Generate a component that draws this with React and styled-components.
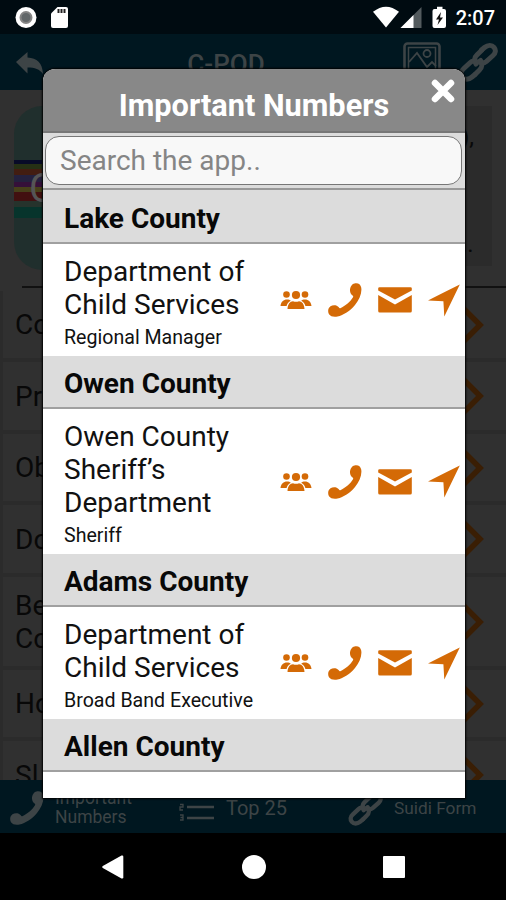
import React from "react";
import styled, { createGlobalStyle } from "styled-components";

const contacts = [
  { county: "Lake County", name: ["Department of", "Child Services"], role: "Regional Manager" },
  { county: "Owen County", name: ["Owen County", "Sheriff’s", "Department"], role: "Sheriff" },
  { county: "Adams County", name: ["Department of", "Child Services"], role: "Broad Band Executive" },
  { county: "Allen County" },
];

const menuItems = [
  { label: ["Co"], height: 71 },
  { label: ["Pr"], height: 72 },
  { label: ["Ob"], height: 71 },
  { label: ["Do"], height: 72 },
  { label: ["Be", "Co"], height: 93 },
  { label: ["Ho"], height: 71 },
  { label: ["Sl"], height: 72 },
];

const PhoneIcon = ({ color = "#d46a06" }) => (
  <svg width="34" height="34" viewBox="0 0 34 34">
    <path
      fill={color}
      d="M26.500 .5C30 -.3 32.500 1.200 33.200 4.500C34.200 10 31.500 16.500 27 22C22 28 15.500 32.200 9.500 33.500C6 34.200 2.500 33.600 1 31.300C-.5 28.500 0 25 2.500 23.300C5 21.700 9 22 10.800 24.300C11.300 25 11.500 25.600 12.300 25.200C17.500 22.600 22.500 18.500 25 14.200C25.400 13.400 25.200 13 24.600 12.600C22.800 11.300 22 9.500 22 7.300C22.100 4 23.800 1.100 26.500 .5Z"
    />
  </svg>
);

const LinkIcon = ({ size = 40, color = "#3d4446" }) => (
  <svg width={size} height={size} viewBox="0 0 40 40" fill="none" stroke={color} strokeWidth="5" strokeLinecap="round">
    <path d="M23.500 8L26.500 5.500C30 2.700 34 3 36 5.300C38.300 8 37.500 11.200 35 13.500L28.500 19.300C26.500 21 23.500 21.500 21 19.800" />
    <path d="M17 32.500L14 35C10.500 38 6.500 37.700 4.500 35.300C2.200 32.600 2.700 29.300 5.300 27L12 20.700C14 18.800 17 18.500 19.300 20.300" />
    <path d="M18 22C16 19 16.300 15.300 19 12.800L24 8M22.500 18.500C24.500 21.500 24.200 25.500 21.500 28L17 32.500" />
  </svg>
);

const UsersIcon = () => (
  <svg width="32" height="20" viewBox="0 0 32 20" fill="#d46a06">
    <circle cx="6.500" cy="4.500" r="3.300" />
    <circle cx="25" cy="4.500" r="3.300" />
    <circle cx="16" cy="5" r="4.100" />
    <path d="M.5 16C1 12 3.500 9.600 7 9.600C8.700 9.600 10 10 10.800 10.700C8.500 12 7 13.700 6.600 16Z" />
    <path d="M31.500 16C31 12 28.500 9.600 25 9.600C23.300 9.600 22 10 21.200 10.700C23.500 12 25 13.700 25.400 16Z" />
    <path d="M7.500 19C7.800 14 10 11.200 13 11.200Q16 12.200 19 11.200C22 11.200 24.200 14 24.500 19Z" />
  </svg>
);

const MailIcon = () => (
  <svg width="34" height="26" viewBox="0 0 34 26" fill="#d46a06">
    <path d="M1.500 .3H32.500Q33.800 .3 33.800 1.600V3.500L17 12.600L.2 3.500V1.600Q.2 .3 1.500 .3Z" />
    <path d="M.2 8L17 17.400L33.800 8V24Q33.800 25.500 32.300 25.500H1.700Q.2 25.500 .2 24Z" />
  </svg>
);

const LocationIcon = () => (
  <svg width="32" height="33" viewBox="0 0 32 33">
    <path fill="#d46a06" d="M31.800 .4L16.300 32.600L15.400 17.200L0 16.400Q10 11.200 31.800 .4Z" />
  </svg>
);

const App = () => {
  return (
    <Phone>
      <GlobalStyle />
      <StatusBar>
        <StatusGroup>
          <svg width="56" height="24" viewBox="0 0 56 24">
            <circle cx="11" cy="11.500" r="10.500" fill="#fff" />
            <circle cx="11" cy="11.500" r="5.500" fill="#626769" stroke="#858585" strokeWidth="2" />
            <path fill="#fff" d="M42.500 1H51Q53 1 53 3V20Q53 22 51 22H38Q36 22 36 20V7.500Z" />
            <path stroke="#222" strokeWidth="2" d="M43.500 3V7M46.500 3V7M49.500 3V7" />
          </svg>
        </StatusGroup>
        <StatusGroup>
          <svg width="75" height="24" viewBox="0 0 75 24">
            <path fill="#fff" d="M0 5.800Q13 -4.500 26 5.800L13 21.500Z" />
            <path fill="#535b5e" d="M48.500 1V22H27.500Z" />
            <path fill="#fff" d="M40.500 9V22H27.500Z" />
            <path fill="#fff" d="M61.500 3H64V.8H69.500V3H71Q73 3 73 5V20Q73 22 71 22H61.500Q59.500 22 59.500 20V5Q59.500 3 61.500 3Z" />
            <path fill="#111" d="M68 6L63 13.500H66L64.500 19L70 11.500H67Z" />
          </svg>
          <Clock>2:07</Clock>
        </StatusGroup>
      </StatusBar>

      <Header>
        <svg width="28" height="23" viewBox="0 0 28 23">
          <path fill="#3d4446" d="M0 10L11.500 0V5.500C21 6 26.500 11 27 22C23.500 17 19 15.500 11.500 15.500V21.500Z" />
        </svg>
        <HeaderTitle>C-POD</HeaderTitle>
        <HeaderIcons>
          <svg width="38" height="36" viewBox="0 0 38 36" fill="none" stroke="#3d4446">
            <rect x="1.500" y="1.500" width="35" height="33" rx="3" strokeWidth="2.600" />
            <rect x="5.500" y="5.500" width="27" height="25" strokeWidth="1.500" />
            <circle cx="24" cy="11.500" r="3.500" strokeWidth="1.800" />
            <path d="M6 20L14 11L24 25L29 20L33 24" strokeWidth="1.800" />
          </svg>
          <LinkIcon />
        </HeaderIcons>
      </Header>

      <Body>
        <Hero>
          <Logo>
            <Stripes />
            <LogoLetter>C</LogoLetter>
          </Logo>
          <HeroText>
            <span>),</span>
            <span>..</span>
          </HeroText>
        </Hero>
        {menuItems.map((item, index) => (
          <MenuItem key={index} $height={item.height}>
            <div>
              {item.label.map((line) => (
                <div key={line}>{line}</div>
              ))}
            </div>
            <svg width="24" height="40" viewBox="0 0 24 40">
              <path d="M3 3L20 20L3 37" fill="none" stroke="#3a1e04" strokeWidth="5.500" />
            </svg>
          </MenuItem>
        ))}
      </Body>

      <Tabs>
        <Tab $width={169}>
          <PhoneIcon color="#3d4446" />
          <TabLabel $size={17.5}>
            Important
            <br />
            Numbers
          </TabLabel>
        </Tab>
        <Tab $width={169}>
          <svg width="36" height="28" viewBox="0 0 36 28">
            <path stroke="#3d4446" strokeWidth="2.600" d="M8 2H35M8 13H35M8 24H35" />
            <path stroke="#3d4446" strokeWidth="1.300" fill="none" d="M2 -1V4M1 10.500H4V13H1V16H4M1 21H4V26H1M1.500 23.500H4" />
          </svg>
          <TabLabel $size={20}>Top 25</TabLabel>
        </Tab>
        <Tab $width={168}>
          <LinkIcon size={35} />
          <TabLabel $size={17.3}>Suidi Form</TabLabel>
        </Tab>
      </Tabs>

      <AndroidNav>
        <svg width="22" height="24" viewBox="0 0 22 24">
          <path fill="#fff" d="M.8 11L19.500 .6Q21.300 0 21.300 1.800V22.200Q21.300 24 19.500 23.400L.8 13Q-.4 12 .8 11Z" />
        </svg>
        <NavCircle />
        <NavSquare />
      </AndroidNav>

      <Modal>
        <ModalHeader>
          Important Numbers
          <CloseButton aria-label="Close">
            <svg width="24" height="24" viewBox="0 0 24 24">
              <path d="M4 4L20 20M20 4L4 20" stroke="#fff" strokeWidth="6.500" strokeLinecap="round" />
            </svg>
          </CloseButton>
        </ModalHeader>
        <SearchBar>
          <SearchInput placeholder="Search the app.." />
        </SearchBar>
        {contacts.map((item, index) => (
          <React.Fragment key={item.county}>
            <County $first={index === 0}>{item.county}</County>
            {item.name && (
              <Contact>
                <ContactText>
                  {item.name.map((line) => (
                    <Name key={line}>{line}</Name>
                  ))}
                  <Role>{item.role}</Role>
                </ContactText>
                <Actions>
                  <UsersIcon />
                  <PhoneIcon />
                  <MailIcon />
                  <LocationIcon />
                </Actions>
              </Contact>
            )}
          </React.Fragment>
        ))}
      </Modal>
    </Phone>
  );
};

const GlobalStyle = createGlobalStyle`
  * {
    box-sizing: border-box;
  }

  body {
    margin: 0;
    background: #000;
    font-family: Roboto, "Liberation Sans", sans-serif;
  }

  svg {
    display: block;
    flex-shrink: 0;
  }
`;

const Phone = styled.div`
  position: relative;
  display: flex;
  flex-direction: column;
  width: 506px;
  height: 900px;
  overflow: hidden;
  background: #000;
`;

const StatusBar = styled.div`
  display: flex;
  justify-content: space-between;
  height: 34px;
  padding: 6px 11px 0 15px;
  background: #000b11;
`;

const StatusGroup = styled.div`
  display: flex;
  gap: 8px;
`;

const Clock = styled.span`
  color: #fff;
  font-size: 20px;
  font-weight: 500;
  line-height: 24px;
`;

const Header = styled.div`
  display: flex;
  align-items: flex-start;
  height: 56px;
  padding: 8px 8px 0 16px;
  background: #001720;

  > svg {
    margin-top: 10px;
  }
`;

const HeaderTitle = styled.div`
  width: 364px;
  padding-top: 5px;
  color: #3d4446;
  font-size: 26px;
  font-weight: 500;
  line-height: 34px;
  text-align: center;
`;

const HeaderIcons = styled.div`
  display: flex;
  gap: 17px;
  margin-left: -5px;
`;

const Body = styled.div`
  height: 690px;
  overflow: hidden;
  background: #303030;
`;

const Hero = styled.div`
  display: flex;
  justify-content: space-between;
  height: 198px;
  margin: 0 0 3px 22px;
  padding: 16px 14px 20px 0;
  border-bottom: 2px solid #111;
`;

const Logo = styled.div`
  display: flex;
  align-items: center;
  width: 150px;
  height: 164px;
  margin-left: -8px;
  overflow: hidden;
  border-radius: 28px;
  background: #202f2d;
`;

const Stripes = styled.div`
  width: 28px;
  height: 58px;
  flex-shrink: 0;
  margin-top: 1px;
  background: linear-gradient(
    #080b28 0 4px,
    #263015 4px 9px,
    #421d11 9px 15px,
    #24213e 15px 22px,
    #351039 22px 27px,
    #47401a 27px 32px,
    #421010 32px 41px,
    #26332c 41px 47px,
    #07342c 47px
  );
`;

const LogoLetter = styled.div`
  margin-left: -13px;
  color: #555;
  font-size: 40px;
`;

const HeroText = styled.div`
  display: flex;
  flex-direction: column;
  justify-content: space-between;
  width: 40px;
  padding: 17px 0 8px 9px;
  background: #2b2b2b;
  color: #080808;
  font-size: 24px;
`;

const MenuItem = styled.div`
  display: flex;
  align-items: center;
  justify-content: space-between;
  height: ${({ $height }) => $height}px;
  padding: 0 22px 0 12px;
  border-bottom: 4px solid #2b2b2b;
  border-left: 3px solid #2b2b2b;
  color: #080808;
  font-size: 28px;
  line-height: 33px;
`;

const Tabs = styled.div`
  display: flex;
  height: 53px;
  background: #001720;
`;

const Tab = styled.div`
  display: flex;
  align-items: center;
  gap: 11px;
  width: ${({ $width }) => $width}px;
  padding: 3px 0 0 10px;
`;

const TabLabel = styled.div`
  color: #3d4446;
  font-size: ${({ $size }) => $size}px;
  line-height: 19px;
  white-space: nowrap;
`;

const AndroidNav = styled.div`
  display: flex;
  align-items: center;
  justify-content: space-between;
  height: 67px;
  padding: 0 101px 0 102px;
`;

const NavCircle = styled.div`
  width: 24px;
  height: 24px;
  border-radius: 50%;
  background: #fff;
`;

const NavSquare = styled.div`
  width: 22px;
  height: 22px;
  border-radius: 1px;
  background: #fff;
`;

const Modal = styled.div`
  position: absolute;
  top: 69px;
  left: 43px;
  width: 422px;
  height: 729px;
  overflow: hidden;
  border-radius: 12px 12px 0 0;
  background: #fff;
  box-shadow: 0 0 2px 1px #000;
`;

const ModalHeader = styled.div`
  position: relative;
  height: 64px;
  padding-top: 18px;
  border-bottom: 2px solid #777;
  background: #888;
  color: #fff;
  font-size: 30.7px;
  font-weight: 700;
  line-height: 38px;
  text-align: center;
`;

const CloseButton = styled.button`
  position: absolute;
  top: 10px;
  right: 10px;
  padding: 0;
  border: 0;
  background: none;
`;

const SearchBar = styled.div`
  height: 57px;
  padding: 3px 3px 4px 2px;
  border-bottom: 2px solid #999;
  background: #dcdcdc;
`;

const SearchInput = styled.input`
  width: 100%;
  height: 49px;
  padding: 0 14px;
  border: 1px solid #777;
  border-radius: 14px;
  outline: 0;
  background: #f8f8f8;
  font-family: inherit;
  font-size: 28px;

  &::placeholder {
    color: #858585;
  }
`;

const County = styled.div`
  height: ${({ $first }) => ($first ? 54 : 53)}px;
  padding: ${({ $first }) => ($first ? 12 : 11)}px 0 0 21px;
  border-bottom: 2px solid #a0a0a0;
  background: #dcdcdc;
  color: #080808;
  font-size: 28px;
  font-weight: 700;
  line-height: 33px;
`;

const Contact = styled.div`
  display: flex;
  align-items: center;
  justify-content: space-between;
  padding: 11px 5px 7px 21px;
`;

const ContactText = styled.div`
  color: #111;
`;

const Name = styled.div`
  font-size: 28px;
  line-height: 33px;
`;

const Role = styled.div`
  padding-top: 5px;
  font-size: 19.6px;
  line-height: 23px;
`;

const Actions = styled.div`
  display: flex;
  align-items: center;
  gap: 16px;
  margin-bottom: 4px;
`;

export default App;
